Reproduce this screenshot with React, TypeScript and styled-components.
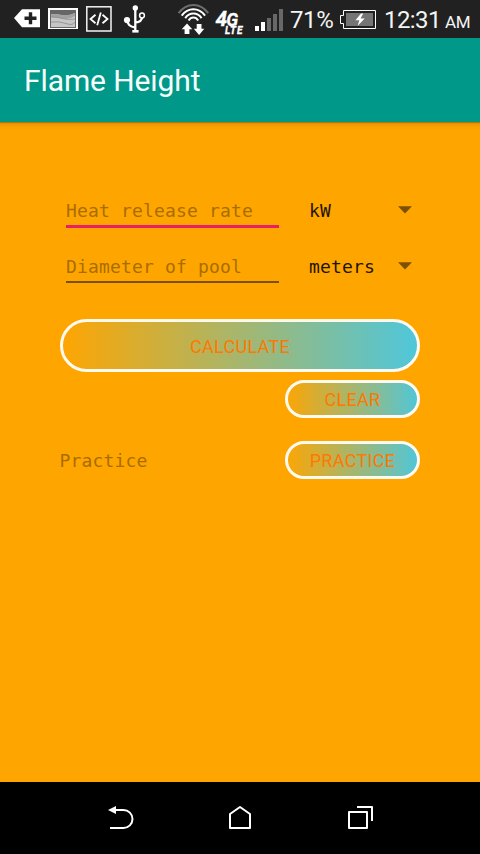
import React from 'react';
import styled, { createGlobalStyle } from 'styled-components';

const GlobalStyle = createGlobalStyle`
  html, body { margin: 0; padding: 0; background: #000; }
  * { box-sizing: border-box; }
`;

const Screen = styled.div`
  width: 480px;
  height: 854px;
  display: flex;
  flex-direction: column;
  overflow: hidden;
  background: #ffa500;
  font-family: Roboto, sans-serif;
`;

const StatusBar = styled.header`
  height: 38px;
  flex: none;
  display: flex;
  background: #212121;
  color: #fff;
`;

const Icon = styled.svg<{ $before?: number }>`
  display: block;
  flex: none;
  margin-left: ${(p) => p.$before ?? 0}px;
`;

const StatusText = styled.span<{ $before: number; $size: number; $width: number; $top?: number; $tight?: number }>`
  flex: none;
  width: ${(p) => p.$width}px;
  margin-left: ${(p) => p.$before}px;
  padding-top: ${(p) => p.$top ?? 0}px;
  font-size: ${(p) => p.$size}px;
  letter-spacing: ${(p) => p.$tight ?? 0}px;
  line-height: 39px;
  white-space: nowrap;
  color: #f4f4f4;
`;

const AppBar = styled.div`
  height: 84px;
  flex: none;
  display: flex;
  align-items: center;
  padding: 1px 24px 0;
  background: #009888;
`;

const Title = styled.h1`
  margin: 0;
  font-size: 30px;
  font-weight: 400;
  line-height: 37px;
  letter-spacing: -0.1px;
  color: #f7fffd;
`;

const Content = styled.main`
  flex: 1;
  padding: 68px 60px 0;
  background: linear-gradient(#9c5c00 0, #d98b00 1px, #ec9800 2px, #f79f00 4px, #ffa500 8px);
`;

const FieldRow = styled.div`
  height: 56px;
  display: flex;
  padding: 0 6px;
`;

const Field = styled.input<{ $active?: boolean }>`
  width: 213px;
  height: ${(p) => (p.$active ? 38 : 37)}px;
  padding: 5px 0 0;
  border: 0;
  border-bottom: ${(p) => (p.$active ? '3px solid #e91e63' : '2px solid #7b5000')};
  border-radius: 0;
  outline: 0;
  background: transparent;
  font: 18px/30px 'DejaVu Sans Mono', monospace;
  letter-spacing: 0.16px;
  color: #1a1100;
  &::placeholder { color: #a86d00; opacity: 1; }
`;

const Spinner = styled.div`
  flex: 1;
  height: 40px;
  margin-left: 30px;
  padding-right: 2px;
  display: flex;
  align-items: center;
  justify-content: space-between;
  font: 18px/40px 'DejaVu Sans Mono', monospace;
  letter-spacing: 0.16px;
  color: #1e1400;
`;

const SpinnerValue = styled.span`
  padding-top: 2px;
`;

const PillButton = styled.button<{ $wide?: boolean }>`
  display: block;
  flex: none;
  width: ${(p) => (p.$wide ? 360 : 135)}px;
  height: ${(p) => (p.$wide ? 53 : 38)}px;
  padding: ${(p) => (p.$wide ? 3 : 1)}px 0 0;
  border: 3px solid #fffaf0;
  border-radius: ${(p) => (p.$wide ? 27 : 19)}px;
  background: linear-gradient(90deg, #ffa500, #4dc7dc) border-box;
  font: 400 18px/20px Roboto, sans-serif;
  letter-spacing: 0.3px;
  color: #ff7800;
`;

const ClearRow = styled.div`
  display: flex;
  justify-content: flex-end;
  margin-top: 8px;
`;

const PracticeRow = styled.div`
  display: flex;
  justify-content: space-between;
  align-items: center;
  margin-top: 23px;
`;

const PracticeLabel = styled.span`
  height: 38px;
  margin-left: -0.5px;
  font: 18px/40px 'DejaVu Sans Mono', monospace;
  letter-spacing: 0.16px;
  color: #a86d00;
`;

const ButtonGroup = styled.section`
  padding-top: 17px;
`;

const NavBar = styled.nav`
  height: 72px;
  flex: none;
  display: flex;
  justify-content: center;
  background: #000;
`;

const NavButton = styled.button`
  width: 120px;
  height: 72px;
  padding: 0;
  border: 0;
  display: flex;
  justify-content: center;
  align-items: center;
  background: transparent;
`;

const StatusIcons = () => (
  <>
    <Icon $before={12} width="30" height="38" viewBox="12 0 30 38">
      <path d="M14 18 L22 9.3 H40 V27.3 H22 Z" fill="#fff" />
      <path d="M30.5 12.2 V24.2 M24.5 18.2 H36.5" stroke="#212121" strokeWidth="3.4" />
    </Icon>
    <Icon $before={4} width="34" height="38" viewBox="46 0 34 38">
      <path d="M48 8 H78 V29 H48 Z" fill="#fff" />
      <rect x="50.5" y="10.5" width="25" height="17" fill="#c6c6c6" stroke="#666" />
      <path d="M51 11 H75 V13 Q69 16.5 62 15 T51 14 Z" fill="#666" />
      <path d="M51 14 Q57 14 62 15 T75 13 V16 Q69 20 62 18.5 T51 17 Z" fill="#a2a2a2" />
      <path d="M51 17 Q58 17 63 18.6 T75 19 M51 22 Q59 21 66 23.5 T75 22" fill="none" stroke="#8b8b8b" strokeWidth=".8" />
    </Icon>
    <Icon $before={4} width="30" height="38" viewBox="84 0 30 38">
      <rect x="86.8" y="6.8" width="24.2" height="24.2" fill="none" stroke="#f4f4f4" strokeWidth="1.5" />
      <path d="M95.5 14.8 L90.5 19 L95.5 23.2 M102.5 14.8 L107.5 19 L102.5 23.2 M100.8 12.5 L97.2 25.2" fill="none" stroke="#fff" strokeWidth="1.8" />
    </Icon>
    <Icon $before={8} width="26" height="38" viewBox="122 0 26 38">
      <path d="M135.3 8 V31 M127 20 Q127.5 26.5 135.3 27.5 M135.3 22.5 Q142 22 142.3 16.5" fill="none" stroke="#fff" strokeWidth="2.3" />
      <path d="M132.3 31.3 H138.6" stroke="#fff" strokeWidth="2.6" />
      <circle cx="135.3" cy="8" r="2.7" fill="#fff" />
      <circle cx="127" cy="20" r="3.1" fill="#fff" />
      <circle cx="142" cy="15.5" r="2.4" fill="#212121" stroke="#fff" strokeWidth="1.5" />
    </Icon>
    <Icon $before={29} width="34" height="38" viewBox="177 0 34 38">
      <g fill="none" strokeWidth="2">
        <path d="M178.6 13.2 Q184.5 5 193.4 5 T208.2 13.2" stroke="#6e6e6e" />
        <path d="M181.7 15.6 Q186.5 9.3 193.4 9.3 T205.1 15.6" stroke="#fff" />
        <path d="M185.2 18.1 Q188.5 13.5 193.4 13.5 T201.6 18.1" stroke="#fff" />
        <path d="M188.6 20.5 Q190.5 17.6 193.4 17.6 T198.2 20.5" stroke="#fff" />
      </g>
      <path d="M187 23.5 L192.3 29.3 H189.4 V34 H184.6 V29.3 H181.7 Z M196.7 24 H201.5 V28.8 H204.3 L199.1 35 L193.8 28.8 H196.7 Z" fill="#fff" />
    </Icon>
    <Icon $before={4} width="32" height="38" viewBox="215 0 32 38">
      <g fill="#fff" stroke="#fff" strokeWidth=".3" fontFamily="Roboto" fontWeight="700" fontStyle="italic">
        <text x="215.5" y="26" fontSize="21">4<tspan x="226.2" fontSize="18">G</tspan></text>
        <text x="225" y="34" fontSize="10" letterSpacing=".9">LTE</text>
      </g>
    </Icon>
    <Icon $before={7} width="30" height="38" viewBox="254 0 30 38">
      <path d="M255 26 h4 v5 h-4 Z M261 22 h4 v9 h-4 Z" fill="#fff" />
      <path d="M267 18 h4 v13 h-4 Z M273 14 h4 v17 h-4 Z M279 9 h4 v22 h-4 Z" fill="#686868" />
    </Icon>
    <StatusText $before={6} $size={24} $width={46} $top={1} $tight={-0.4}>71%</StatusText>
    <Icon $before={3} width="38" height="38" viewBox="339 0 38 38">
      <path d="M343.5 10.5 H375.5 V28.5 H343.5 V23.5 H340.5 V15.5 H343.5 Z" fill="none" stroke="#fff" />
      <rect x="346" y="13" width="27" height="13" fill="#757575" />
      <path d="M361 13.5 L355.5 20.2 H359.3 L357.7 25.8 L364.7 18.5 H360.6 L363.2 13.5 Z" fill="#fff" />
    </Icon>
    <StatusText $before={7} $size={24} $width={59} $top={1} $tight={-0.6}>12:31</StatusText>
    <StatusText $before={2} $size={17} $width={28} $top={3} $tight={-0.3}>AM</StatusText>
  </>
);

const Caret = () => (
  <Icon width="14" height="8" viewBox="0 0 14 8">
    <path d="M0 0.3 H14 L7 7.5 Z" fill="#7b5000" />
  </Icon>
);

export default function App() {
  return (
    <Screen>
      <GlobalStyle />
      <StatusBar><StatusIcons /></StatusBar>
      <AppBar><Title>Flame Height</Title></AppBar>
      <Content>
        <FieldRow>
          <Field $active placeholder="Heat release rate" />
          <Spinner><SpinnerValue>kW</SpinnerValue><Caret /></Spinner>
        </FieldRow>
        <FieldRow>
          <Field placeholder="Diameter of pool" />
          <Spinner><SpinnerValue>meters</SpinnerValue><Caret /></Spinner>
        </FieldRow>
        <ButtonGroup>
          <PillButton $wide>CALCULATE</PillButton>
          <ClearRow><PillButton>CLEAR</PillButton></ClearRow>
          <PracticeRow>
            <PracticeLabel>Practice</PracticeLabel>
            <PillButton>PRACTICE</PillButton>
          </PracticeRow>
        </ButtonGroup>
      </Content>
      <NavBar>
        <NavButton aria-label="Back">
          <Icon width="30" height="30" viewBox="105 803 30 30" fill="none" stroke="#fff" strokeWidth="2">
            <path d="M114 810 H123.5 A9 9 0 0 1 123.5 828 H110" />
            <path d="M108 810 L116 806 V814 Z" fill="#fff" stroke="none" />
          </Icon>
        </NavButton>
        <NavButton aria-label="Home">
          <Icon width="30" height="30" viewBox="225 803 30 30" fill="none" stroke="#fff" strokeWidth="2" strokeLinejoin="round">
            <path d="M230 828 V814 L240 807 L250 814 V828 Z" />
          </Icon>
        </NavButton>
        <NavButton aria-label="Recent apps">
          <Icon width="30" height="30" viewBox="345 803 30 30" fill="none" stroke="#fff" strokeWidth="2" strokeLinejoin="round">
            <rect x="349" y="812" width="18" height="16" />
            <path d="M357 807 H372 V821" />
          </Icon>
        </NavButton>
      </NavBar>
    </Screen>
  );
}
